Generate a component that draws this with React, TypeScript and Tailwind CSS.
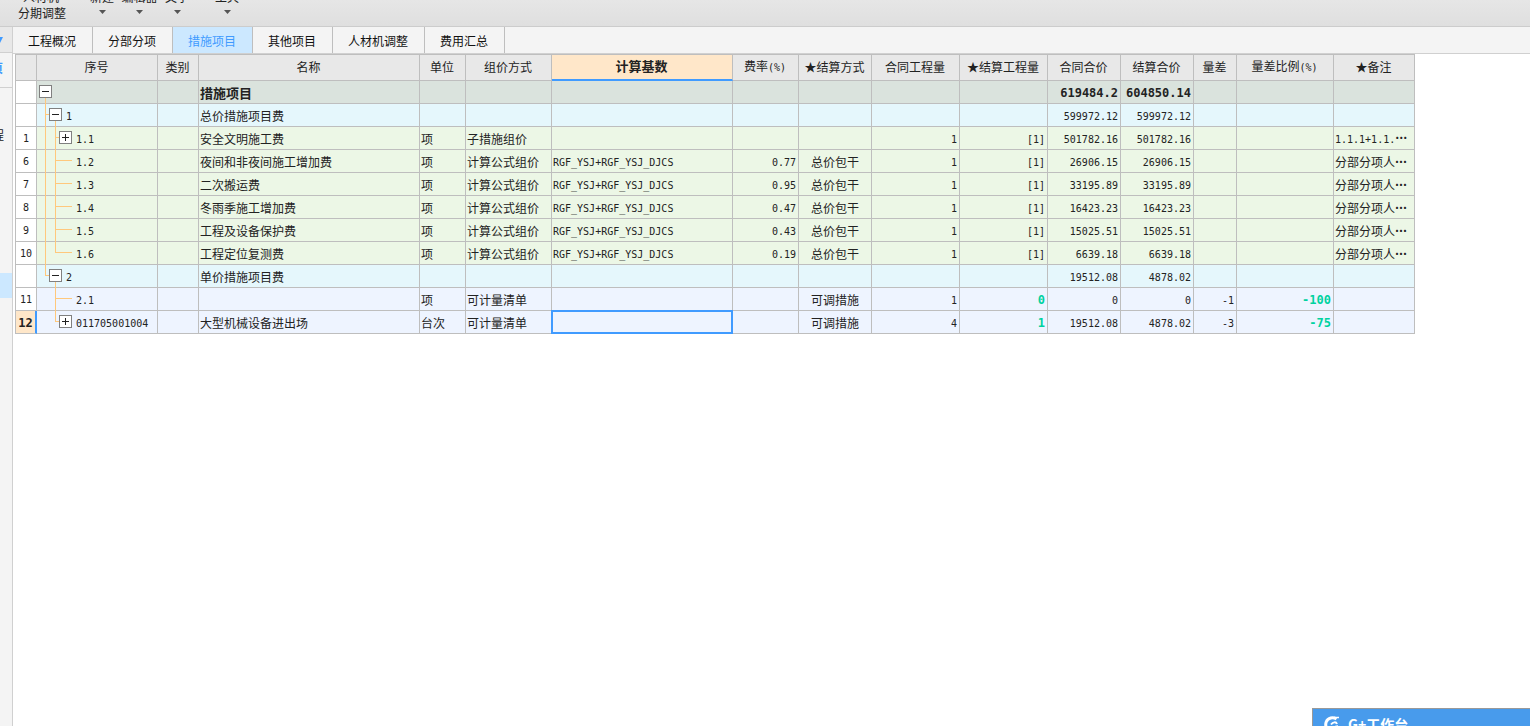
import { Fragment } from "react";
import clsx from "clsx";

type Tone = "root" | "group" | "item" | "list";

interface Row {
  no: string;
  code: string;
  tone: Tone;
  level: number;
  toggle?: "+" | "-";
  last?: boolean;
  name?: string;
  unit?: string;
  method?: string;
  base?: string;
  rate?: string;
  settle?: string;
  qty?: string;
  settleQty?: string;
  total?: string;
  settleTotal?: string;
  diff?: string;
  ratio?: string;
  remark?: string;
}

const formula = {
  tone: "item" as Tone,
  level: 2,
  unit: "项",
  method: "计算公式组价",
  base: "RGF_YSJ+RGF_YSJ_DJCS",
  settle: "总价包干",
  qty: "1",
  settleQty: "[1]",
  remark: "分部分项人…",
};

const rows: Row[] = [
  { no: "", code: "", tone: "root", level: 0, toggle: "-", name: "措施项目", total: "619484.2", settleTotal: "604850.14" },
  { no: "", code: "1", tone: "group", level: 1, toggle: "-", name: "总价措施项目费", total: "599972.12", settleTotal: "599972.12" },
  { no: "1", code: "1.1", tone: "item", level: 2, toggle: "+", name: "安全文明施工费", unit: "项", method: "子措施组价", qty: "1", settleQty: "[1]", total: "501782.16", settleTotal: "501782.16", remark: "1.1.1+1.1.…" },
  { ...formula, no: "6", code: "1.2", name: "夜间和非夜间施工增加费", rate: "0.77", total: "26906.15", settleTotal: "26906.15" },
  { ...formula, no: "7", code: "1.3", name: "二次搬运费", rate: "0.95", total: "33195.89", settleTotal: "33195.89" },
  { ...formula, no: "8", code: "1.4", name: "冬雨季施工增加费", rate: "0.47", total: "16423.23", settleTotal: "16423.23" },
  { ...formula, no: "9", code: "1.5", name: "工程及设备保护费", rate: "0.43", total: "15025.51", settleTotal: "15025.51" },
  { ...formula, no: "10", code: "1.6", name: "工程定位复测费", rate: "0.19", total: "6639.18", settleTotal: "6639.18", last: true },
  { no: "", code: "2", tone: "group", level: 1, toggle: "-", last: true, name: "单价措施项目费", total: "19512.08", settleTotal: "4878.02" },
  { no: "11", code: "2.1", tone: "list", level: 2, unit: "项", method: "可计量清单", settle: "可调措施", qty: "1", settleQty: "0", total: "0", settleTotal: "0", diff: "-1", ratio: "-100" },
  { no: "12", code: "011705001004", tone: "list", level: 2, toggle: "+", last: true, name: "大型机械设备进出场", unit: "台次", method: "可计量清单", settle: "可调措施", qty: "4", settleQty: "1", total: "19512.08", settleTotal: "4878.02", diff: "-3", ratio: "-75" },
];

const columns = [
  { title: "", width: "w-[22px]" },
  { title: "序号", width: "w-[121px]" },
  { title: "类别", width: "w-[41px]" },
  { title: "名称", width: "w-[221px]" },
  { title: "单位", width: "w-[46px]" },
  { title: "组价方式", width: "w-[86px]" },
  { title: "计算基数", width: "w-[181px]" },
  { title: "费率(%)", width: "w-[66px]" },
  { title: "★结算方式", width: "w-[73px]" },
  { title: "合同工程量", width: "w-[88px]" },
  { title: "★结算工程量", width: "w-[88px]" },
  { title: "合同合价", width: "w-[73px]" },
  { title: "结算合价", width: "w-[73px]" },
  { title: "量差", width: "w-[43px]" },
  { title: "量差比例(%)", width: "w-[97px]" },
  { title: "★备注", width: "w-[81px]" },
];

const tabs = ["工程概况", "分部分项", "措施项目", "其他项目", "人材机调整", "费用汇总"];

const toneClass: Record<Tone, string> = {
  root: "bg-[#dae3dd] font-bold text-[13px]",
  group: "bg-[#e5f7fc]",
  item: "bg-[#ecf7e6]",
  list: "bg-[#eef4ff]",
};

// Latin runs use a half-width mono face so digits line up with the CJK grid
function Mixed({ text = "", bold = false }: { text?: string; bold?: boolean }) {
  return (
    <>
      {text.split(/([\x20-\x7e]+|…)/).map((part, i) => {
        if (part === "…") {
          return (
            <span key={i} className="font-black">
              {part}
            </span>
          );
        }
        return i % 2 ? (
          <span
            key={i}
            className={clsx("font-['DejaVu_Sans_Mono',monospace]", bold ? "text-[12px] font-bold" : "text-[10px]")}
          >
            {part}
          </span>
        ) : (
          <Fragment key={i}>{part}</Fragment>
        );
      })}
    </>
  );
}

function TreeCell({ row, underGroupTwo }: { row: Row; underGroupTwo: boolean }) {
  const { level, toggle, last } = row;
  const end = last ? 10 : 23;
  let lines = "";
  if (level === 0) lines = "M8.5 17V23";
  if (level === 1) lines = `M8.5 0V${last ? 10.5 : end}M8 10.5H12M18.5 17V23`;
  if (level === 2) {
    lines = `M18.5 0V${last ? 11 : end}M18 10.5H${toggle ? 22 : 35}`;
    if (!underGroupTwo) lines += "M8.5 0V23";
  }
  const indent = ["pl-[2px]", "pl-[12px]", "pl-[22px]"][level];

  return (
    <div className={clsx("relative flex h-[22px] items-center", indent)}>
      <svg
        className="pointer-events-none absolute top-0 left-0"
        width="36"
        height="23"
        fill="none"
        stroke="#ffc87c"
        shapeRendering="crispEdges"
      >
        <path d={lines} />
      </svg>
      {toggle ? (
        <button
          type="button"
          aria-label={toggle === "+" ? "展开" : "折叠"}
          className="relative mb-px flex size-[13px] shrink-0 items-center justify-center border border-[#808080] bg-white"
        >
          <svg width="7" height="7" stroke="#222" fill="none">
            <path d={toggle === "+" ? "M0 3.5H7M3.5 0V7" : "M0 3.5H7"} />
          </svg>
        </button>
      ) : (
        <span className="w-[13px] shrink-0" />
      )}
      <span className="pt-[2px] pl-1">
        <Mixed text={row.code} />
      </span>
    </div>
  );
}

const cell = "h-[23px] overflow-hidden border-r border-b border-[#bebebe] p-0 pt-px whitespace-nowrap";

function DataRow({ row, index }: { row: Row; index: number }) {
  const selected = row.no === "12";
  const bold = row.tone === "root";
  const changed = row.tone === "list";
  const left = clsx(cell, "pl-px");
  const right = clsx(cell, "pr-[2px] text-right");
  const accent = changed && "font-bold text-[#00d2a0]";

  return (
    <tr className={toneClass[row.tone]}>
      <th
        scope="row"
        className={clsx(
          "h-[23px] border-b border-l border-[#bebebe] p-0 text-center",
          selected ? "border-r-2 border-r-[#409bff] bg-[#ffe7c9] font-bold" : "border-r bg-white font-normal",
        )}
      >
        <Mixed text={row.no} bold={selected} />
      </th>
      <td className="h-[23px] border-r border-b border-[#bebebe] p-0 font-normal">
        <TreeCell row={row} underGroupTwo={index > 8} />
      </td>
      <td className={left} />
      <td className={left}>{row.name}</td>
      <td className={left}>{row.unit}</td>
      <td className={left}>{row.method}</td>
      {selected ? (
        <td className="relative h-[23px] border-r border-b border-[#bebebe] p-0">
          <input
            aria-label="计算基数"
            className="absolute -inset-px border-2 border-[#409bff] bg-[#eef4ff] px-px text-[10px] outline-none"
          />
        </td>
      ) : (
        <td className={left}>
          <Mixed text={row.base} />
        </td>
      )}
      <td className={right}>
        <Mixed text={row.rate} />
      </td>
      <td className={clsx(cell, "text-center")}>{row.settle}</td>
      <td className={right}>
        <Mixed text={row.qty} />
      </td>
      <td className={clsx(right, accent)}>
        <Mixed text={row.settleQty} bold={changed} />
      </td>
      <td className={right}>
        <Mixed text={row.total} bold={bold} />
      </td>
      <td className={right}>
        <Mixed text={row.settleTotal} bold={bold} />
      </td>
      <td className={right}>
        <Mixed text={row.diff} />
      </td>
      <td className={clsx(right, accent)}>
        <Mixed text={row.ratio} bold={changed} />
      </td>
      <td className={left}>
        <Mixed text={row.remark} />
      </td>
    </tr>
  );
}

function Caret() {
  return (
    <svg width="7" height="4" fill="#555">
      <path d="M0 0H7L3.5 4Z" />
    </svg>
  );
}

function Toolbar() {
  const menus = [
    { label: "新建", className: "w-[38px]" },
    { label: "编辑器", className: "w-[37px]" },
    { label: "文字", className: "w-[38px]" },
    { label: "工具", className: "ml-3 w-[38px]" },
  ];
  return (
    <header className="flex h-[27px] shrink-0 items-end overflow-hidden border-b border-[#cccccc] bg-linear-to-b from-[#e6e6e6] to-[#dfdfdf] pb-[5px] pl-[18px]">
      <div className="flex w-[65px] flex-col items-start leading-4">
        <button type="button" className="pl-[5px]">
          人材机
        </button>
        <button type="button">分期调整</button>
      </div>
      {menus.map((menu) => (
        <button
          key={menu.label}
          type="button"
          className={clsx("flex flex-col items-center leading-4 whitespace-nowrap", menu.className)}
        >
          {menu.label}
          <span className="flex h-4 items-start pt-[5px]">
            <Caret />
          </span>
        </button>
      ))}
    </header>
  );
}

function Sidebar() {
  return (
    <aside className="flex w-[13px] shrink-0 flex-col overflow-hidden border-r border-[#d0d0d0] bg-[#f4f4f4]">
      <div className="flex h-[26px] shrink-0 items-center border-b border-[#d0d0d0] bg-[#e8e8e8]">
        <svg width="3" height="6" fill="#409bff">
          <path d="M0 0H3L0 6Z" />
        </svg>
      </div>
      <div className="flex h-[35px] shrink-0 items-center border-b border-[#d0d0d0] pb-1 text-[#409bff]">
        <span className="flex w-[3px] justify-end overflow-hidden font-bold">页</span>
      </div>
      <div className="flex h-[185px] shrink-0 items-start pt-[37px]">
        <span className="flex w-1 justify-end overflow-hidden leading-5">程</span>
      </div>
      <div className="h-[25px] shrink-0 bg-[#cce8ff]" />
    </aside>
  );
}

export default function App() {
  return (
    <div
      lang="zh-CN"
      className="relative flex h-screen flex-col overflow-hidden bg-white font-['Noto_Sans_CJK_SC',sans-serif] text-[12px] leading-4 text-[#222222]"
    >
      <Toolbar />
      <div className="flex min-h-0 flex-1">
        <Sidebar />
        <main className="flex min-w-0 flex-1 flex-col">
          <nav className="flex h-[27px] shrink-0 border-b border-[#d0d0d0] bg-[#f4f4f4]">
            {tabs.map((tab) => (
              <button
                key={tab}
                type="button"
                className={clsx(
                  "border-r border-[#bebebe] pt-[2px] pr-4 pl-[15px]",
                  tab === "措施项目" ? "bg-[#cce8ff] text-[#409bff]" : "text-[#111111]",
                )}
              >
                {tab}
              </button>
            ))}
          </nav>
          <div className="min-h-0 flex-1 overflow-hidden pl-[2px]">
            <table className="w-[1400px] table-fixed border-separate border-spacing-0">
              <thead>
                <tr>
                  {columns.map((col, i) => (
                    <th
                      key={i}
                      scope="col"
                      className={clsx(
                        "h-[27px] border-t border-r border-[#bebebe] p-0 pr-px pb-[2px] text-center whitespace-nowrap",
                        col.width,
                        i === 0 && "border-l",
                        col.title === "计算基数"
                          ? "border-b-2 border-b-[#409bff] bg-[#ffe7c9] text-[13px] font-bold"
                          : "border-b bg-[#e8e8e8] font-normal",
                      )}
                    >
                      <Mixed text={col.title} />
                    </th>
                  ))}
                </tr>
              </thead>
              <tbody>
                {rows.map((row, i) => (
                  <DataRow key={i} row={row} index={i} />
                ))}
              </tbody>
            </table>
          </div>
        </main>
      </div>
      <button
        type="button"
        className="absolute right-0 bottom-0 flex h-[18px] w-[218px] items-start gap-2 overflow-hidden border-t border-l border-[#999999] bg-[#489bec] pt-[7px] pl-[10px] text-[14px] font-bold text-white"
      >
        <svg width="17" height="17" viewBox="0 0 17 17" fill="none" stroke="#fff" strokeWidth="3">
          <path d="M13.500 3C10 .8 5 1.500 3.200 6C1.500 11 5 15 9 15C12 15 14 12.500 13.500 9.500" />
          <path d="M8 8.500C10 6 13 5.500 14 8" strokeWidth="2" />
          <path d="M11 1.500H16" strokeWidth="1.500" />
        </svg>
        G+工作台
      </button>
    </div>
  );
}
